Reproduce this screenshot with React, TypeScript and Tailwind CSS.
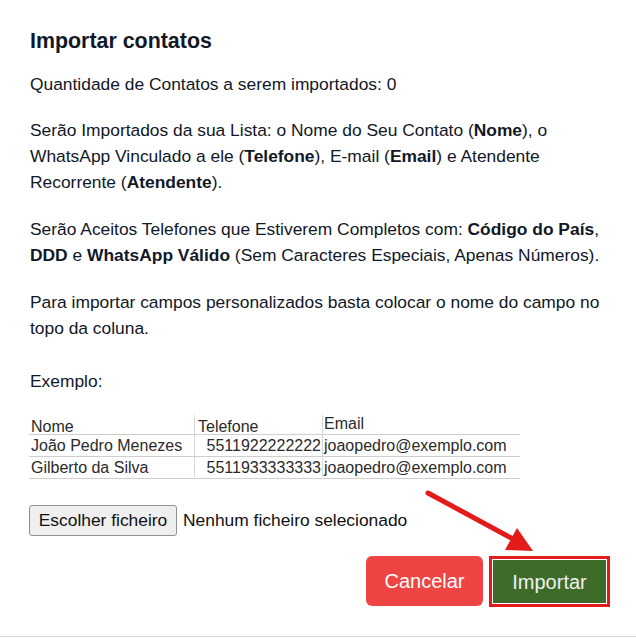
import React from "react";

export default function App() {
  return (
    <div className="relative w-[636px] h-[638px] bg-white overflow-hidden" style={{ fontFamily: '"Liberation Sans", Arial, sans-serif' }}>
      <div className="absolute left-0 right-0 bottom-[1px] h-[1px] bg-[#d4d4d4]" />
      <div className="pl-[30px] pr-[28px] pt-[27px] text-[17.4px] text-[#111827]">
        <h2 className="text-[21.4px] font-bold leading-[28px] mb-[16px]">Importar contatos</h2>
        <p className="leading-[26px] mb-[20px]">Quantidade de Contatos a serem importados: 0</p>
        <p className="leading-[26px] mb-[21px]">
          Serão Importados da sua Lista: o Nome do Seu Contato (<b>Nome</b>), o WhatsApp Vinculado a ele (<b>Telefone</b>), E-mail (<b>Email</b>) e Atendente Recorrente (<b>Atendente</b>).
        </p>
        <p className="leading-[26px] mb-[21px]">
          Serão Aceitos Telefones que Estiverem Completos com: <b>Código do País</b>, <b>DDD</b> e <b>WhatsApp Válido</b> (Sem Caracteres Especiais, Apenas Números).
        </p>
        <p className="leading-[26px] mb-[27px]">
          Para importar campos personalizados basta colocar o nome do campo no topo da coluna.
        </p>
        <p className="leading-[26px] mb-[21px]">Exemplo:</p>
        <div className="ml-[-1px] w-[491px] text-[16px] text-[#2a2a2a] leading-[21px]">
          <div className="flex border-b border-[#cfcfcf]">
            <div className="w-[166px] pl-[2px] pt-[1px] h-[19px] border-r border-[#d8d8d8]">Nome</div>
            <div className="w-[128px] pl-[3px] pt-[1px] h-[19px] border-r border-[#d8d8d8]">Telefone</div>
            <div className="flex-1 pl-[1px] mt-[-2px]">Email</div>
          </div>
          <div className="flex border-b border-[#cfcfcf]">
            <div className="w-[166px] pl-[2px] h-[21px] border-r border-[#d8d8d8]">João Pedro Menezes</div>
            <div className="w-[128px] pr-[1px] h-[21px] text-right border-r border-[#d8d8d8]">5511922222222</div>
            <div className="flex-1 pl-[1px]">joaopedro@exemplo.com</div>
          </div>
          <div className="flex border-b border-[#cfcfcf]">
            <div className="w-[166px] pl-[2px] h-[20px] border-r border-[#d8d8d8]">Gilberto da Silva</div>
            <div className="w-[128px] pr-[1px] h-[20px] text-right border-r border-[#d8d8d8]">5511933333333</div>
            <div className="flex-1 pl-[1px]">joaopedro@exemplo.com</div>
          </div>
        </div>
        <div className="mt-[26px] flex items-center ml-[-1px]">
          <div className="h-[31px] w-[148px] flex items-center justify-center border border-[#8f8f8f] rounded-[3px] bg-[#efefef] text-[17.4px] text-[#111]">Escolher ficheiro</div>
          <span className="ml-[6px] text-[17.4px] text-[#111]">Nenhum ficheiro selecionado</span>
        </div>
        <div className="mt-[20px] flex justify-end gap-[6px] mr-[-2px]">
          <div className="w-[117px] h-[50px] rounded-[6px] bg-[#ef4444] text-white text-[20px] flex items-center justify-center">Cancelar</div>
          <div className="w-[121px] h-[51px] border-[3px] border-[#e31b1b] p-[1px] flex">
            <div className="flex-1 bg-[#3d6b29] text-[#f0f0f0] text-[20px] flex items-center justify-center">Importar</div>
          </div>
        </div>
      </div>
      <svg className="absolute left-0 top-0 pointer-events-none" width="636" height="638">
        <line x1="428" y1="493" x2="515" y2="540" stroke="#e31b1b" strokeWidth="5" strokeLinecap="round" />
        <polygon points="533,551 505,550 517,528" fill="#e31b1b" />
      </svg>
    </div>
  );
}
